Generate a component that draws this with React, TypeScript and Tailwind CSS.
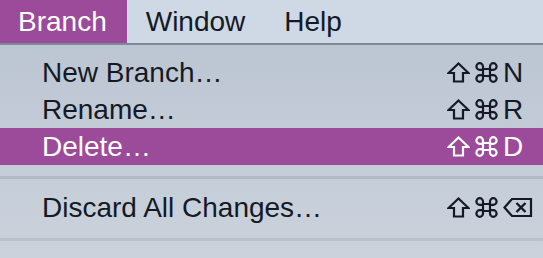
const font = { fontFamily: '"Liberation Sans", Arial, sans-serif' };

function ShiftIcon({ color }: { color: string }) {
  return (
    <svg width="23" height="21" viewBox="0 0 23 21" fill="none">
      <path
        d="M11.5 1.5 L21.5 11 H16 V19.5 H7 V11 H1.5 Z"
        stroke={color}
        strokeWidth="2.2"
        strokeLinejoin="miter"
      />
    </svg>
  );
}

function CmdIcon({ color }: { color: string }) {
  return (
    <svg width="23" height="21" viewBox="0 0 23 21" fill="none">
      <path
        d="M8 7 H15 V14 H8 Z M8 7 V4.5 A3.3 3.3 0 1 0 4.7 7.8 H8 M15 7 V4.5 A3.3 3.3 0 1 1 18.3 7.8 H15 M8 14 V16.5 A3.3 3.3 0 1 1 4.7 13.2 H8 M15 14 V16.5 A3.3 3.3 0 1 0 18.3 13.2 H15"
        stroke={color}
        strokeWidth="2.2"
      />
    </svg>
  );
}

function DeleteIcon({ color }: { color: string }) {
  return (
    <svg width="30" height="21" viewBox="0 0 30 21" fill="none">
      <path
        d="M9 2 H28 V19 H9 L1.5 10.5 Z"
        stroke={color}
        strokeWidth="2.2"
        strokeLinejoin="miter"
      />
      <path d="M13.5 6 L22.5 15 M22.5 6 L13.5 15" stroke={color} strokeWidth="2.4" />
    </svg>
  );
}

function Item({
  label,
  keyName,
  active = false,
}: {
  label: string;
  keyName: string;
  active?: boolean;
}) {
  const color = active ? "#ffffff" : "#141a25";
  return (
    <div
      className={`flex h-[37px] items-center pl-[42px] pr-[10px] ${
        active ? "bg-[#9b4b99] text-white" : "text-[#141a25]"
      }`}
    >
      <span className="flex-1 text-[28px] leading-none">{label}</span>
      <div className="flex items-center gap-[5px]">
        <ShiftIcon color={color} />
        <CmdIcon color={color} />
        <div className="flex w-[30px] items-center text-[28px] leading-none">
          {keyName === "delete" ? <DeleteIcon color={color} /> : keyName}
        </div>
      </div>
    </div>
  );
}

export default function App() {
  return (
    <div className="h-[258px] w-[543px] overflow-hidden" style={font}>
      <div className="flex h-[43px] items-center bg-[#cfd8e5] text-[28px] leading-none text-[#141a25]">
        <div className="flex h-full items-center bg-[#9b4b99] pl-[18px] pr-[20px] text-white">
          Branch
        </div>
        <div className="px-[19px]">Window</div>
        <div className="px-[20px]">Help</div>
      </div>
      <div className="h-[2px] bg-[#7f8895]" />
      <div className="h-[213px] bg-gradient-to-b from-[#bcc6d2] to-[#cbd2dc] pt-[9px]">
        <Item label="New Branch…" keyName="N" />
        <Item label="Rename…" keyName="R" />
        <Item label="Delete…" keyName="D" active />
        <div className="mb-[10px] mt-[11px] h-[3px] bg-[#b2bbc7]" />
        <Item label="Discard All Changes…" keyName="delete" />
        <div className="mt-[12px] h-[3px] bg-[#bac1cb]" />
      </div>
    </div>
  );
}
